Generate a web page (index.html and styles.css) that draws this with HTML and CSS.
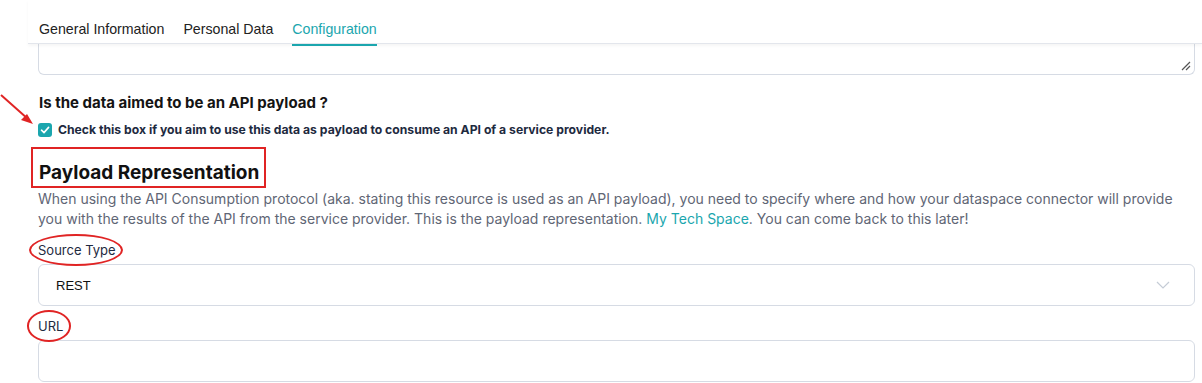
FILE: index.html
```html
<!DOCTYPE html>
<html lang="en">
  <head>
    <meta charset="UTF-8" />
    <title>Configuration</title>
    <link rel="stylesheet" href="styles.css">
  </head>
  <body>
    <nav class="tabs">
      <a class="tab">General Information</a>
      <a class="tab">Personal Data</a>
      <a class="tab active">Configuration</a>
    </nav>

    <div class="content">
      <div class="textarea-tail">
        <svg class="grip" width="10" height="10" viewBox="0 0 10 10">
          <path d="M1 9 L9 1 M5 9 L9 5" stroke="#555" stroke-width="1.2" fill="none" />
        </svg>
      </div>

      <svg class="arrow" width="40" height="40" viewBox="0 0 40 40">
        <line x1="1" y1="2" x2="28" y2="26" stroke="#e02424" stroke-width="2" />
        <path d="M33 31 L21 27 L27 21 Z" fill="#e02424" />
      </svg>

      <h3 class="question">Is the data aimed to be an API payload ?</h3>
      <label class="check">
        <span class="box">
          <svg width="10" height="10" viewBox="0 0 10 10">
            <path d="M1.5 5.2 L4 7.6 L8.6 2.4" stroke="#fff" stroke-width="1.6" fill="none" stroke-linecap="round" stroke-linejoin="round" />
          </svg>
        </span>
        Check this box if you aim to use this data as payload to consume an API of a service provider.
      </label>

      <h2 class="section-title">Payload Representation</h2>
      <p class="intro">
        When using the API Consumption protocol (aka. stating this resource is used as an API payload), you need to specify where and how your dataspace connector will provide
        you with the results of the API from the service provider. This is the payload representation. <a class="link">My Tech Space</a>. You can come back to this later!
      </p>

      <div class="field">
        <span class="field-label circled">Source Type</span>
        <div class="select">
          <span>REST</span>
          <svg width="14" height="8" viewBox="0 0 14 8">
            <path d="M1 1 L7 7 L13 1" stroke="#c5ccd6" stroke-width="1.2" fill="none" />
          </svg>
        </div>
      </div>

      <div class="field last">
        <span class="field-label circled wide">URL</span>
        <div class="input"></div>
      </div>
    </div>
  </body>
</html>
```

FILE: styles.css
```css
body {
  margin: 0;
  background: #fff;
  font-family: Inter, "Noto Sans", sans-serif;
  overflow: hidden;
}

.tabs {
  display: flex;
  gap: 19px;
  margin-left: 28px;
  padding-left: 11px;
  border-bottom: 1px solid #e3e6ec;
  height: 44px;
  box-sizing: border-box;
  position: relative;
  z-index: 1;
  box-shadow: 0 2px 3px rgba(0, 0, 0, 0.04);
}

.tab {
  font-family: "Liberation Sans", Arial, sans-serif;
  font-size: 14.2px;
  color: #222;
  line-height: 14px;
  padding-top: 22px;
  height: 22px;
}

.tab.active {
  color: #1ba6ae;
  border-bottom: 2px solid #1ba6ae;
}

.content {
  position: relative;
  padding: 0 7px 0 38px;
}

.textarea-tail {
  height: 27px;
  border: 1px solid #d6dbe4;
  border-top: none;
  border-radius: 0 0 6px 6px;
  display: flex;
  justify-content: flex-end;
  align-items: flex-end;
  padding: 0 3px 3px 0;
}

.arrow {
  position: absolute;
  left: 0;
  top: 49px;
}

.question {
  font-size: 15px;
  font-weight: 700;
  color: #141414;
  margin: 19px 0 0 1px;
  line-height: 18px;
}

.check {
  display: flex;
  align-items: center;
  gap: 6px;
  margin-top: 10px;
  font-size: 12.2px;
  font-weight: 700;
  color: #1e2a40;
  line-height: 16px;
}

.box {
  width: 14px;
  height: 14px;
  border-radius: 3px;
  background: #1ba6ae;
  display: flex;
  align-items: center;
  justify-content: center;
}

.section-title {
  display: inline-block;
  margin: 9px 0 0 -7px;
  padding: 12px 5px 1px 6px;
  border: 2px solid #e02424;
  font-size: 19px;
  font-weight: 700;
  color: #111;
  line-height: 24px;
}

.intro {
  margin: 1px 0 0;
  font-size: 14px;
  line-height: 20px;
  color: #5f6675;
}

.link {
  color: #1ba6ae;
}

.field {
  margin-top: 10px;
}

.field.last {
  margin-top: 9px;
}

.field-label {
  display: inline-block;
  position: relative;
  font-size: 13px;
  color: #1e2a40;
  line-height: 20px;
  margin-bottom: 4px;
}

.circled::before {
  content: "";
  position: absolute;
  left: -9px;
  right: -7px;
  top: -6px;
  bottom: -6px;
  border: 2px solid #e02424;
  border-radius: 50%;
}

.circled.wide::before {
  left: -11px;
  right: -8px;
}

.select,
.input {
  height: 40px;
  border: 1px solid #d6dbe4;
  border-radius: 6px;
}

.select {
  display: flex;
  align-items: center;
  justify-content: space-between;
  padding: 0 24px 0 17px;
  font-family: "Liberation Sans", Arial, sans-serif;
  font-size: 13px;
  color: #111;
}
```
